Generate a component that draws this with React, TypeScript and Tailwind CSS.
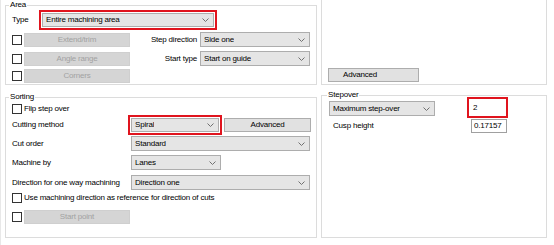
import React from 'react'

const font = { fontFamily: '"Liberation Sans", Arial, sans-serif' }

function Chevron() {
  return (
    <svg width="7" height="4" viewBox="0 0 7 4" className="shrink-0">
      <polyline points="0.5,0.5 3.5,3.5 6.5,0.5" fill="none" stroke="#707070" strokeWidth="1" />
    </svg>
  )
}

function Combo({ value, w, h = 'h-[15px]' }: { value: string; w: string; h?: string }) {
  return (
    <div className={`${w} ${h} flex items-center justify-between pl-[3px] pr-[4px] bg-[#e5e5e5] border border-[#adadad]`}>
      <span className="truncate">{value}</span>
      <Chevron />
    </div>
  )
}

function Check() {
  return <div className="w-[10px] h-[10px] shrink-0 bg-white border border-[#333333]" />
}

function DisabledButton({ label }: { label: string }) {
  return (
    <div className="w-[106px] h-[14px] flex items-center justify-center bg-[#d5d5d5] border border-[#cfcfcf] text-[#a2a2a2]">
      {label}
    </div>
  )
}

function Highlight({ children, className }: { children: React.ReactNode; className: string }) {
  return <div className={`${className} p-px border-2 border-[#e0141e] flex items-center`}>{children}</div>
}

export default function App() {
  return (
    <div
      className="w-[554px] h-[245px] bg-white text-black text-[8px] leading-[10px] tracking-[-0.2px] flex overflow-hidden"
      style={font}
    >
      <div className="w-px h-full bg-[#e8e8e8]" />

      {/* Left column */}
      <div className="ml-[4px] flex flex-col">
        {/* Area */}
        <fieldset className="w-[312px] h-[85px] border border-[#dcdcdc]">
          <legend className="ml-[3px] px-px leading-[10px]">Area</legend>
          <div className="pl-[6px] flex flex-col">
            <div className="h-[20px] flex items-center">
              <span className="w-[27px]">Type</span>
              <Highlight className="w-[178px] h-[20px]">
                <Combo value="Entire machining area" w="w-full" h="h-[14px]" />
              </Highlight>
            </div>

            <div className="mt-[2px] h-[15px] flex items-center">
              <Check />
              <div className="ml-[2px]"><DisabledButton label="Extend/trim" /></div>
              <span className="w-[70px] pr-[3px] text-right">Step direction</span>
              <Combo value="Side one" w="w-[110px]" />
            </div>

            <div className="mt-[4px] h-[15px] flex items-center">
              <Check />
              <div className="ml-[2px]"><DisabledButton label="Angle range" /></div>
              <span className="w-[70px] pr-[3px] text-right">Start type</span>
              <Combo value="Start on guide" w="w-[110px]" />
            </div>

            <div className="mt-[2px] h-[15px] flex items-center">
              <Check />
              <div className="ml-[2px]"><DisabledButton label="Corners" /></div>
            </div>
          </div>
        </fieldset>

        {/* Sorting */}
        <fieldset className="mt-[7px] w-[312px] h-[146px] border border-[#dcdcdc]">
          <legend className="ml-[3px] px-px leading-[10px]">Sorting</legend>
          <div className="pl-[6px] flex flex-col">
            <div className="h-[13px] flex items-center gap-[2px]">
              <Check />
              <span>Flip step over</span>
            </div>

            <div className="h-[20px] flex items-center">
              <span className="w-[116px]">Cutting method</span>
              <Highlight className="w-[94px] h-[20px]">
                <Combo value="Spiral" w="w-full" h="h-[14px]" />
              </Highlight>
              <div className="ml-[2px] w-[87px] h-[14px] flex items-center justify-center bg-[#e1e1e1] border border-[#adadad]">
                Advanced
              </div>
            </div>

            <div className="mt-px h-[15px] flex items-center">
              <span className="w-[119px]">Cut order</span>
              <Combo value="Standard" w="w-[179px]" />
            </div>

            <div className="mt-[4px] h-[15px] flex items-center">
              <span className="w-[119px]">Machine by</span>
              <Combo value="Lanes" w="w-[90px]" />
            </div>

            <div className="mt-[5px] h-[15px] flex items-center">
              <span className="w-[119px]">Direction for one way machining</span>
              <Combo value="Direction one" w="w-[179px]" />
            </div>

            <div className="mt-px h-[13px] flex items-center gap-[2px]">
              <Check />
              <span>Use machining direction as reference for direction of cuts</span>
            </div>

            <div className="mt-[6px] h-[14px] flex items-center">
              <Check />
              <div className="ml-[2px]"><DisabledButton label="Start point" /></div>
            </div>
          </div>
        </fieldset>
      </div>

      {/* Right column */}
      <div className="ml-[4px] flex flex-col">
        <div className="w-[226px] h-[85px] border border-t-0 border-[#dcdcdc] pt-[68px] pl-[6px]">
          <div className="w-[91px] h-[14px] flex items-center pl-[14px] bg-[#e1e1e1] border border-[#adadad]">
            Advanced
          </div>
        </div>

        {/* Stepover */}
        <fieldset className="mt-[5px] w-[226px] h-[148px] border border-[#dcdcdc]">
          <legend className="ml-[5px] px-px leading-[10px]">Stepover</legend>
          <div className="flex flex-col">
            <div className="-mt-[3px] pl-[7px] flex items-start">
              <div className="mt-[4px]">
                <Combo value="Maximum step-over" w="w-[106px]" />
              </div>
              <Highlight className="ml-[32px] w-[41px] h-[21px]">
                <div className="w-full h-full flex items-center pl-[3px] bg-white">2</div>
              </Highlight>
            </div>

            <div className="mt-px pl-[11px] h-[14px] flex items-center">
              <span className="w-[138px]">Cusp height</span>
              <div className="w-[36px] h-[14px] flex items-center pl-[2px] whitespace-nowrap bg-white border border-[#a0a0a0]">
                0.17157
              </div>
            </div>
          </div>
        </fieldset>
      </div>
    </div>
  )
}
